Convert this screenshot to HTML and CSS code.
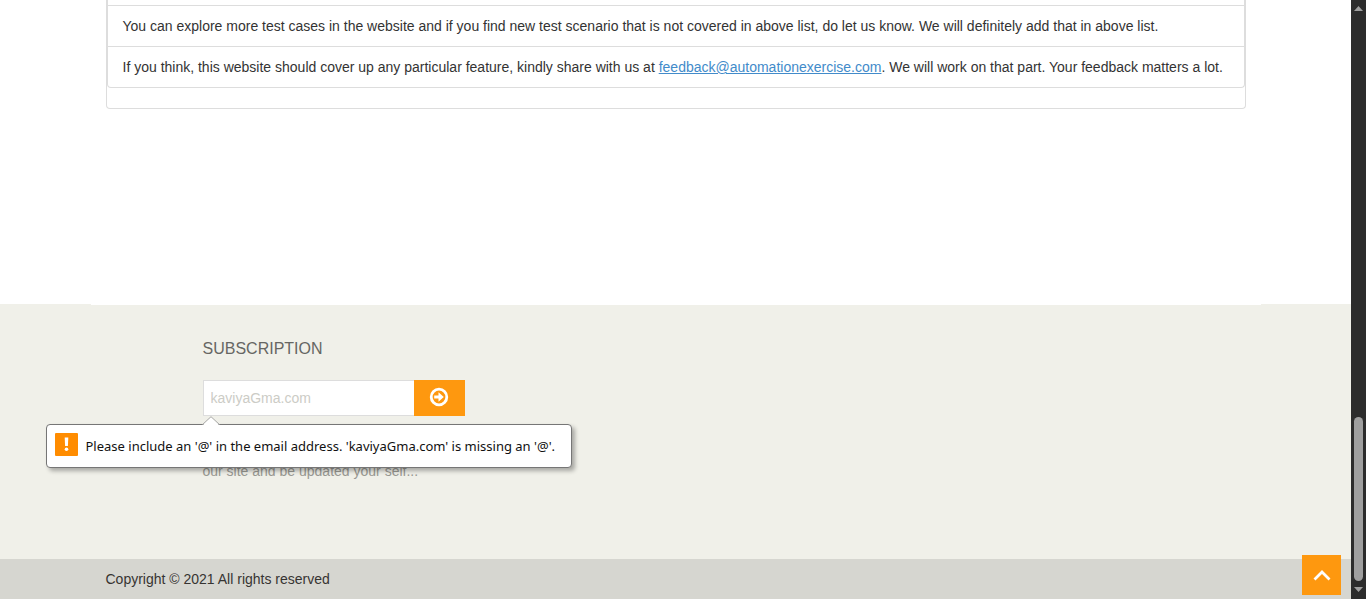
FILE: index.html
```html
<!DOCTYPE html>
<html lang="en">
<head>
<meta charset="utf-8">
<title>Automation Exercise - Test Cases</title>
<link rel="stylesheet" href="styles.css">
</head>
<body>
<div class="page">
  <main class="container content">
    <section class="panel">
      <ul class="list">
        <li class="list-item">You can explore more test cases in the website and if you find new test scenario that is not covered in above list, do let us know. We will definitely add that in above list.</li>
        <li class="list-item">If you think, this website should cover up any particular feature, kindly share with us at <a href="mailto:feedback@automationexercise.com">feedback@automationexercise.com</a>. We will work on that part. Your feedback matters a lot.</li>
      </ul>
    </section>
  </main>
  <footer class="footer">
    <div class="footer-main">
      <div class="container footer-inner">
        <section class="subscribe">
          <h2 class="subscribe-title"><label for="email">Subscription</label></h2>
          <form class="subscribe-form" novalidate>
            <input class="subscribe-input" id="email" type="email" value="kaviyaGma.com" aria-describedby="email-error">
            <button class="subscribe-button" type="submit" aria-label="Subscribe">
              <svg width="20" height="20" viewBox="0 0 20 20" aria-hidden="true">
                <circle cx="10" cy="10" r="7.8" fill="none" stroke="#fff" stroke-width="2.8"/>
                <path d="M5.2 8.600H9.500V5.300L14.800 10l-5.300 4.700v-3.300H5.200z" fill="#fff"/>
              </svg>
            </button>
            <div class="bubble" id="email-error" role="alert">
              <svg class="bubble-tip" width="18" height="9" viewBox="0 0 18 9" aria-hidden="true">
                <path d="M1 9 9 1l8 8z" fill="#fff"/>
                <path d="M.5 8.5 9 .7l8.500 7.800" fill="none" stroke="#aaa"/>
              </svg>
              <svg class="bubble-icon" width="23" height="23" viewBox="0 0 23 23" aria-hidden="true">
                <rect width="23" height="23" rx="1" fill="#ff8c00"/>
                <path d="M9.700 4.500h3.600l-.4 8.500h-2.800z" fill="#fff"/>
                <circle cx="11.500" cy="16.200" r="1.800" fill="#fff"/>
              </svg>
              <span>Please include an '@' in the email address. 'kaviyaGma.com' is missing an '@'.</span>
            </div>
          </form>
          <p class="subscribe-note">our site and be updated your self...</p>
        </section>
      </div>
    </div>
    <div class="footer-bottom">
      <p class="container copyright">Copyright © 2021 All rights reserved</p>
    </div>
  </footer>
</div>
<div class="scrollbar" aria-hidden="true">
  <svg width="9" height="5" viewBox="0 0 9 5"><path d="M4.500 0 9 5H0z" fill="#9f9f9f"/></svg>
  <div class="scrollbar-thumb"></div>
  <svg width="9" height="5" viewBox="0 0 9 5"><path d="M0 0h9L4.500 5z" fill="#9f9f9f"/></svg>
</div>
<a class="to-top" href="#" aria-label="Back to top">
  <svg width="18" height="12" viewBox="0 0 18 12" aria-hidden="true"><path d="M1.500 10.500 9 3l7.500 7.500" fill="none" stroke="#fff" stroke-width="2.800"/></svg>
</a>
</body>
</html>
```
FILE: styles.css
```css
* {
  box-sizing: border-box;
}

body {
  margin: 0;
  display: flex;
  min-height: 100vh;
  background: #fff;
  color: #333;
  font: 14px/20px "Liberation Sans", Arial, sans-serif;
}

.page {
  flex: 1;
  min-width: 0;
  display: flex;
  flex-direction: column;
}

.container {
  width: 100%;
  max-width: 1170px;
  margin: 0 auto;
  padding: 0 15px;
}

.content {
  padding-bottom: 195px;
}

.panel {
  padding-bottom: 20px;
  border: 1px solid #ddd;
  border-top: 0;
  border-radius: 0 0 4px 4px;
}

.list {
  margin: 0;
  padding: 5px 0 0;
  list-style: none;
  border: 1px solid #ddd;
  border-top: 0;
  border-radius: 0 0 4px 4px;
}

.list-item {
  padding: 10px 15px;
  border-top: 1px solid #ddd;
}

.list-item a {
  color: #428bca;
  text-decoration: underline;
}

.footer {
  flex: 1;
  display: flex;
  flex-direction: column;
  background: #f0f0e9;
}

.footer-main {
  flex: 1;
}

.footer-inner {
  padding-top: 34px;
  border-top: 1px solid #fff;
}

.subscribe {
  width: 262px;
  margin-left: 97px;
}

.subscribe-title {
  margin: 0 0 21px;
  color: #666663;
  font-size: 16px;
  font-weight: 400;
  line-height: 20px;
  text-transform: uppercase;
}

.subscribe-form {
  position: relative;
  display: flex;
  height: 36px;
}

.subscribe-input {
  flex: 1;
  min-width: 0;
  padding: 0 7px;
  border: 1px solid #ddd;
  border-right: 0;
  border-radius: 0;
  outline: 0;
  background: #fff;
  color: #ccccc6;
  font: inherit;
}

.subscribe-button {
  display: flex;
  align-items: center;
  justify-content: center;
  width: 51px;
  padding: 0 0 2px;
  border: 0;
  background: #fe980f;
}

.subscribe-note {
  margin: 45px 0 0;
  color: #999993;
}

.bubble {
  position: absolute;
  top: 44px;
  left: -157px;
  z-index: 1;
  display: flex;
  align-items: center;
  gap: 8px;
  min-width: 526px;
  height: 44px;
  padding: 0 8px;
  border: 1px solid #767676;
  border-radius: 4px;
  background: #fff;
  box-shadow: 3px 3px 4px rgba(0, 0, 0, 0.3);
  color: #111;
  font-family: "Noto Sans", "Open Sans", sans-serif;
  font-size: 13px;
  white-space: nowrap;
}

.bubble-tip {
  position: absolute;
  top: -9px;
  left: 155px;
}

.bubble-icon {
  margin-bottom: 4px;
}

.footer-bottom {
  padding: 10px 0;
  background: #d6d6d0;
}

.copyright {
  color: #363432;
}

.scrollbar {
  position: sticky;
  top: 0;
  display: flex;
  flex-direction: column;
  align-items: center;
  width: 15px;
  height: 100vh;
  padding: 6px 0 7px;
  background: #2c2c2c;
}

.scrollbar-thumb {
  width: 9px;
  height: 164px;
  margin: auto 0 6px;
  border-radius: 5px;
  background: #9f9f9f;
}

.to-top {
  position: fixed;
  right: 25px;
  bottom: 4px;
  display: flex;
  align-items: center;
  justify-content: center;
  width: 39px;
  height: 40px;
  background: #fe980f;
}
```
